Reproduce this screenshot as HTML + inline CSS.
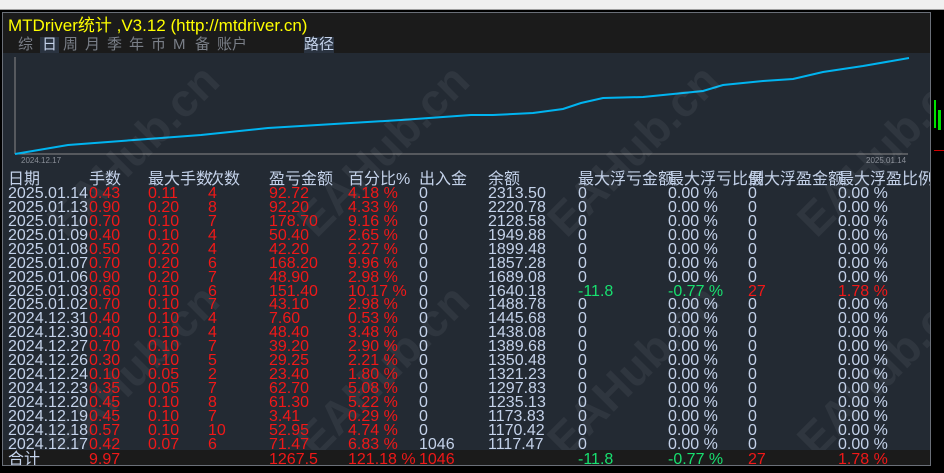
<!DOCTYPE html>
<html><head><meta charset="utf-8"><style>
*{margin:0;padding:0;box-sizing:border-box}
body{width:944px;height:473px;background:#000;position:relative;overflow:hidden;font-family:"Liberation Sans","Noto Sans CJK SC",sans-serif}
.tb{position:absolute;left:0;top:0;width:944px;height:10px;background:#f0f0f0;border-bottom:1px solid #a0a0a0}
.panel{position:absolute;left:2px;top:12px;width:929px;height:454px;background:#232a33;border:1px solid #6a6f78;overflow:hidden}
.hdr{position:absolute;left:0;top:0;width:100%;height:40px;background:#1b1b1b}
.t{position:absolute;white-space:nowrap;font-size:16px;line-height:14px;color:#c4d2ea}
.r{color:#f01818}.g{color:#18e070}
.foot{position:absolute;left:0;top:437px;width:100%;height:17px;background:#1b1b1b}
.wm{position:absolute;font-size:46px;font-weight:bold;color:rgba(255,255,255,0.06);transform:rotate(-45deg);white-space:nowrap}
.tab{position:absolute;top:24px;font-size:15px;line-height:16px;color:#7a7f88}
</style></head><body>
<div class="tb"></div>
<div class="panel">
<div class="hdr"></div>
<div class="t" style="left:5px;top:3px;color:#ffff00;font-size:17px;line-height:19px">MTDriver统计 ,V3.12 (http://mtdriver.cn)</div>
<div class="tab" style="left:15px">综</div>
<div class="tab" style="left:37px;background:#2a3340;color:#c4d2ea;padding:0 2px">日</div>
<div class="tab" style="left:60px">周</div>
<div class="tab" style="left:82px">月</div>
<div class="tab" style="left:104px">季</div>
<div class="tab" style="left:126px">年</div>
<div class="tab" style="left:148px">币</div>
<div class="tab" style="left:170px">M</div>
<div class="tab" style="left:192px">备</div>
<div class="tab" style="left:214px">账户</div>
<div class="tab" style="left:301px;color:#c4d2ea;background:#2a3340">路径</div>
<svg style="position:absolute;left:0;top:0" width="929" height="454">
<line x1="12" y1="44" x2="12" y2="141" stroke="#888" stroke-width="1"/>
<line x1="12" y1="141" x2="905" y2="141" stroke="#888" stroke-width="1"/>
<polyline fill="none" stroke="#00b4f0" stroke-width="2" points="12,141 65,132 131,127 198,122 265,115 331,111 398,107 468,102 490,102 530,100 560,96 578,90 600,85 640,84 680,80 700,78 720,72 760,68 790,66 820,59 860,53 906,45"/>
<text x="18" y="150" fill="#8a8f98" font-size="8" font-family="Liberation Sans">2024.12.17</text>
<text x="863" y="150" fill="#8a8f98" font-size="8" font-family="Liberation Sans">2025.01.14</text>
</svg>
<div class="wm" style="left:20px;top:110px">EAHub.cn</div>
<div class="wm" style="left:270px;top:110px">EAHub.cn</div>
<div class="wm" style="left:520px;top:110px">EAHub.cn</div>
<div class="wm" style="left:770px;top:110px">EAHub.cn</div>
<div class="wm" style="left:20px;top:330px">EAHub.cn</div>
<div class="wm" style="left:270px;top:330px">EAHub.cn</div>
<div class="wm" style="left:520px;top:330px">EAHub.cn</div>
<div class="wm" style="left:770px;top:330px">EAHub.cn</div>
<div id="rows"></div>
<div class="foot"></div>
<div class="t" style="left:5px;top:440px">合计</div>
<div class="t r" style="left:86px;top:440px">9.97</div>
<div class="t r" style="left:266px;top:440px">1267.5</div>
<div class="t r" style="left:345px;top:440px">121.18 %</div>
<div class="t r" style="left:416px;top:440px">1046</div>
<div class="t g" style="left:575px;top:440px">-11.8</div>
<div class="t g" style="left:665px;top:440px">-0.77 %</div>
<div class="t r" style="left:745px;top:440px">27</div>
<div class="t r" style="left:835px;top:440px">1.78 %</div>
</div>
<div style="position:absolute;left:934px;top:100px;width:2px;height:28px;background:#00e000"></div>
<div style="position:absolute;left:938px;top:110px;width:3px;height:20px;background:#00e000"></div>
<div style="position:absolute;left:934px;top:150px;width:10px;height:1px;background:#d00000"></div>
<script>
var L=[5,86,145,205,266,345,416,485,575,665,745,835];
var H=["日期","手数","最大手数","次数","盈亏金额","百分比%","出入金","余额","最大浮亏金额","最大浮亏比例","最大浮盈金额","最大浮盈比例"];
var D=[["2025.01.14","0.43","0.11","4","92.72","4.18 %","0","2313.50"],
["2025.01.13","0.90","0.20","8","92.20","4.33 %","0","2220.78"],
["2025.01.10","0.70","0.10","7","178.70","9.16 %","0","2128.58"],
["2025.01.09","0.40","0.10","4","50.40","2.65 %","0","1949.88"],
["2025.01.08","0.50","0.20","4","42.20","2.27 %","0","1899.48"],
["2025.01.07","0.70","0.20","6","168.20","9.96 %","0","1857.28"],
["2025.01.06","0.90","0.20","7","48.90","2.98 %","0","1689.08"],
["2025.01.03","0.60","0.10","6","151.40","10.17 %","0","1640.18"],
["2025.01.02","0.70","0.10","7","43.10","2.98 %","0","1488.78"],
["2024.12.31","0.40","0.10","4","7.60","0.53 %","0","1445.68"],
["2024.12.30","0.40","0.10","4","48.40","3.48 %","0","1438.08"],
["2024.12.27","0.70","0.10","7","39.20","2.90 %","0","1389.68"],
["2024.12.26","0.30","0.10","5","29.25","2.21 %","0","1350.48"],
["2024.12.24","0.10","0.05","2","23.40","1.80 %","0","1321.23"],
["2024.12.23","0.35","0.05","7","62.70","5.08 %","0","1297.83"],
["2024.12.20","0.45","0.10","8","61.30","5.22 %","0","1235.13"],
["2024.12.19","0.45","0.10","7","3.41","0.29 %","0","1173.83"],
["2024.12.18","0.57","0.10","10","52.95","4.74 %","0","1170.42"],
["2024.12.17","0.42","0.07","6","71.47","6.83 %","1046","1117.47"]];
var h="";
function c(x,y,t,cl){h+='<div class="t '+(cl||"")+'" style="left:'+x+'px;top:'+y+'px">'+t+'</div>';}
H.forEach(function(t,i){c(L[i],160,t);});
D.forEach(function(r,i){var y=174+i*13.93;
c(L[0],y,r[0]);for(var k=1;k<=5;k++)c(L[k],y,r[k],"r");c(L[6],y,r[6]);c(L[7],y,r[7]);
if(i==7){c(L[8],y,"-11.8","g");c(L[9],y,"-0.77 %","g");c(L[10],y,"27","r");c(L[11],y,"1.78 %","r");}
else{c(L[8],y,"0");c(L[9],y,"0.00 %");c(L[10],y,"0");c(L[11],y,"0.00 %");}});
document.getElementById("rows").innerHTML=h;
</script>
</body></html>
